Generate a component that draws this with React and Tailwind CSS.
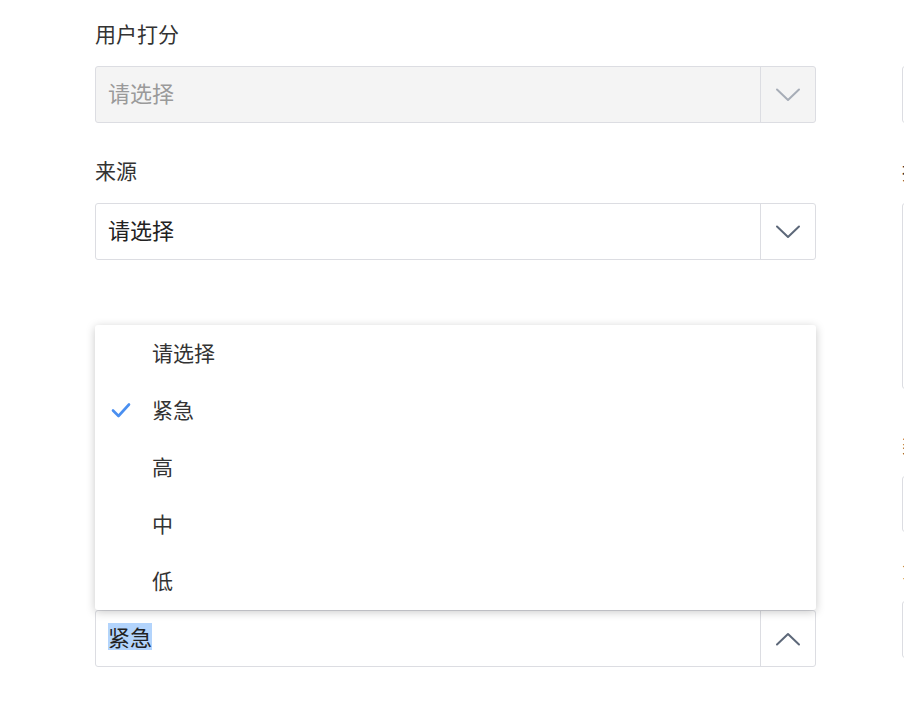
import React from "react";

const font = { fontFamily: '"Noto Sans CJK SC", "Noto Sans", sans-serif' };

const Chevron = ({ up = false, className = "" }) => (
  <svg width="26" height="14" viewBox="0 0 26 14" className={className} fill="none">
    <path
      d={up ? "M2 12.5 L13 2 L24 12.5" : "M2 1.5 L13 12 L24 1.5"}
      stroke="currentColor"
      strokeWidth="2"
      strokeLinecap="round"
      strokeLinejoin="round"
    />
  </svg>
);

const Check = () => (
  <svg width="20" height="16" viewBox="0 0 20 16" fill="none">
    <path
      d="M2 8.5 L7.5 14 L18 2.5"
      stroke="#4a8ff0"
      strokeWidth="2.6"
      strokeLinecap="round"
      strokeLinejoin="round"
    />
  </svg>
);

const Label = ({ children, hidden = false }) => (
  <div className="h-[30px] leading-[26px] text-[21px] text-[#333] mb-[16px]">
    {hidden ? null : children}
  </div>
);

const Select = ({ value, disabled = false, open = false, selected = false }) => (
  <div
    className={`flex h-[57px] rounded-[3px] border border-[#dcdde2] ${
      disabled ? "bg-[#f4f4f4]" : "bg-white"
    }`}
  >
    <div className="flex-1 flex items-center pl-[12px] pb-[4px]">
      <span
        className={`text-[22px] leading-[27px] ${
          disabled ? "text-[#9a9a9a]" : "text-[#222]"
        } ${selected ? "bg-[#b3d4fc]" : ""}`}
      >
        {value}
      </span>
    </div>
    <div
      className={`w-[55px] border-l border-[#dcdde2] flex items-center justify-center ${
        disabled ? "text-[#a7adb7]" : "text-[#5d6879]"
      }`}
    >
      <Chevron up={open} />
    </div>
  </div>
);

const Box = ({ h }) => (
  <div className={`rounded-[3px] border border-[#dcdde2] bg-white ${h}`} />
);

const options = ["请选择", "紧急", "高", "中", "低"];

export default function App() {
  return (
    <div className="w-[904px] h-[714px] overflow-hidden bg-white" style={font}>
      <div className="flex gap-[86px] pl-[95px] pt-[20px]">
        <div className="w-[721px] shrink-0">
          <Label>用户打分</Label>
          <Select value="请选择" disabled />

          <div className="mt-[34px]">
            <Label>来源</Label>
            <Select value="请选择" />
          </div>

          <div className="mt-[304px] relative">
            <Label hidden>优先级</Label>
            <div className="relative">
              <div className="absolute left-0 right-0 bottom-full z-10 bg-white rounded-[3px] shadow-[0_2px_10px_rgba(0,0,0,0.22)]">
                {options.map((opt, i) => (
                  <div key={opt} className="h-[57px] flex items-center pb-[2px]">
                    <div className="w-[57px] flex justify-center pr-[6px]">
                      {i === 1 && <Check />}
                    </div>
                    <span className="text-[21px] text-[#333]">{opt}</span>
                  </div>
                ))}
              </div>
              <Select value="紧急" open selected />
            </div>
          </div>
        </div>

        <div className="w-[721px] shrink-0">
          <Label hidden>标题</Label>
          <Box h="h-[57px]" />
          <div className="mt-[34px]">
            <Label>描述</Label>
            <Box h="h-[186px]" />
          </div>
          <div className="mt-[41px]">
            <Label>类型</Label>
            <Box h="h-[56px]" />
          </div>
          <div className="mt-[23px]">
            <Label>负责人</Label>
            <Box h="h-[57px]" />
          </div>
        </div>
      </div>
    </div>
  );
}
